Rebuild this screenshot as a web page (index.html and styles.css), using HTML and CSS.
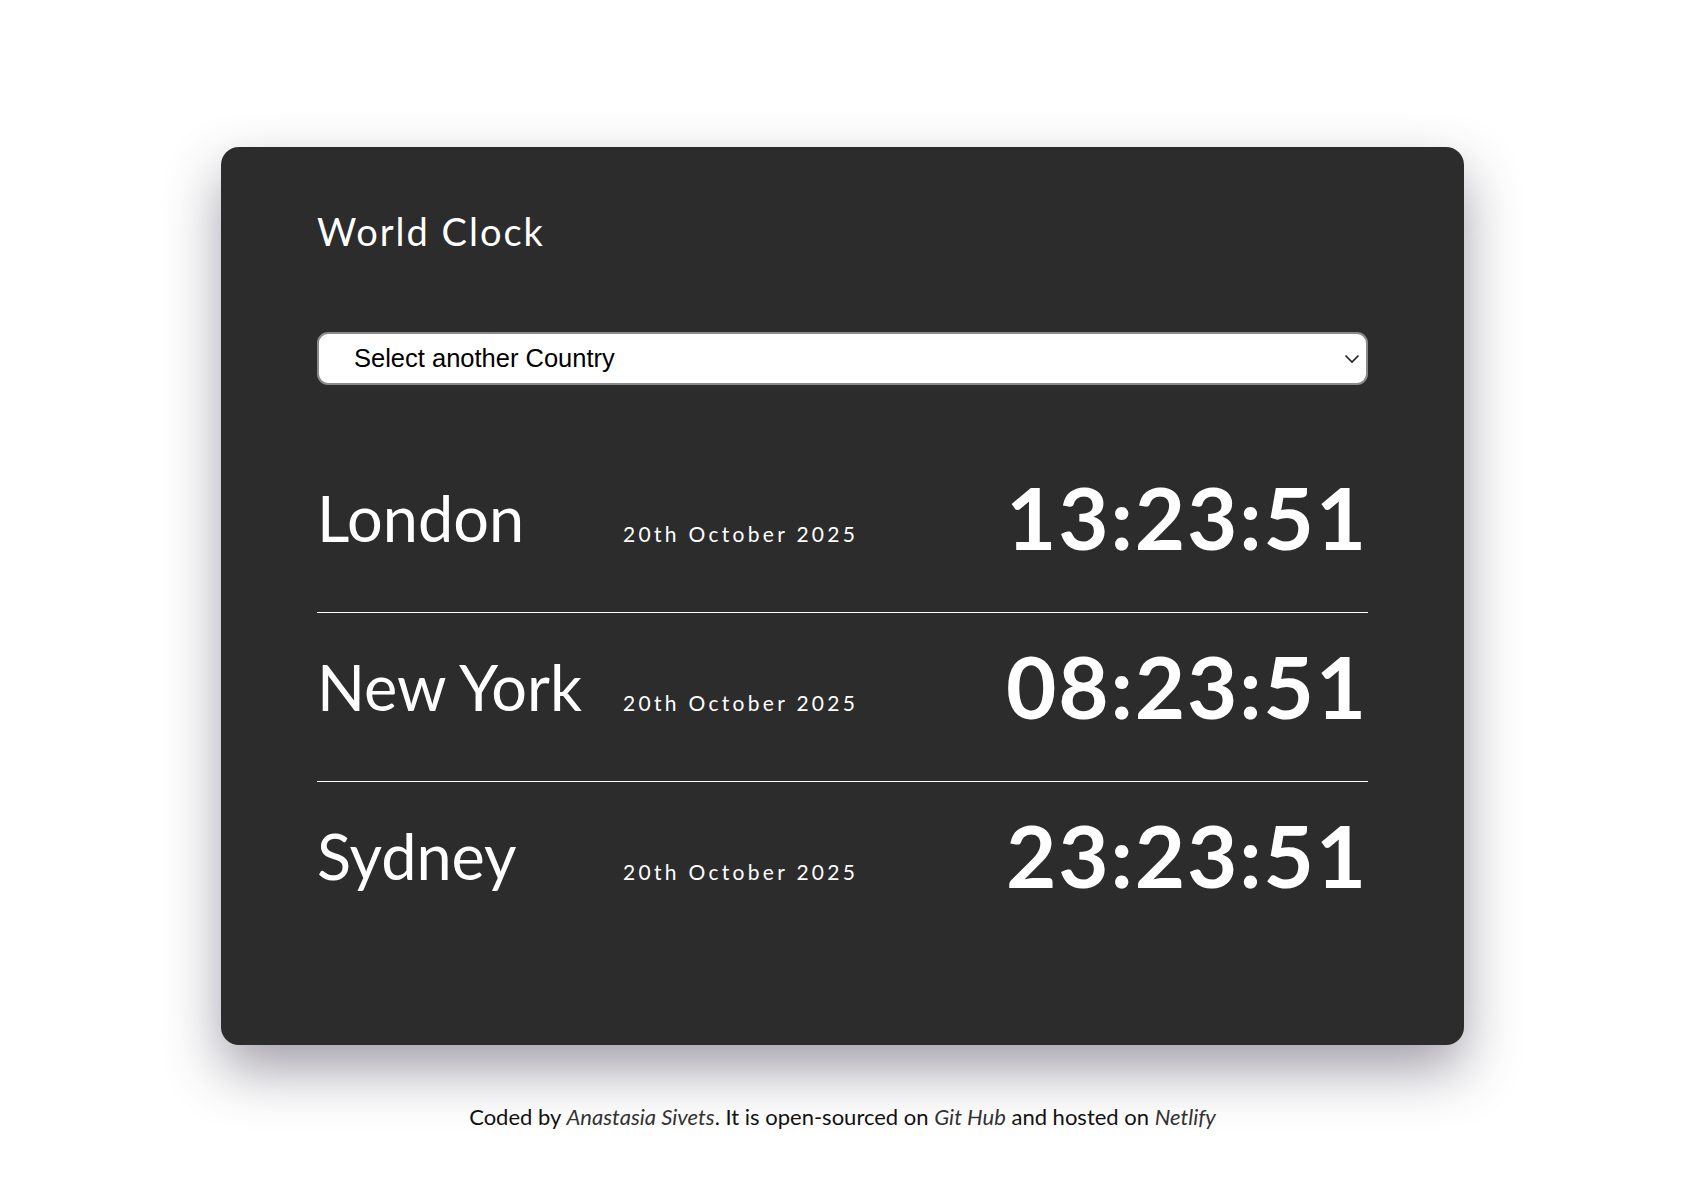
FILE: index.html
```html
<!DOCTYPE html>
<html lang="en">
<head>
    <meta charset="UTF-8">
    <meta name="viewport" content="width=device-width, initial-scale=1.0">
    <title>World Clock</title>
    <link rel="stylesheet" href="styles.css">
</head>
<body>
    <div class="container">
        <div class="clock-card">
            <h1>World Clock</h1>

            <!-- Country picker -->
            <div class="select-wrap">
                <select class="city-select" id="citySelect">
                    <option value="">Select another Country</option>
                    <option value="Europe/Paris">Paris</option>
                    <option value="Asia/Tokyo">Tokyo</option>
                </select>
                <svg class="select-arrow" width="16" height="10" viewBox="0 0 16 10">
                    <path d="M1.5 1.5 L8 8 L14.5 1.5" fill="none" stroke="#222" stroke-width="1.6"/>
                </svg>
            </div>

            <div class="cities" id="cities">
                <div class="city">
                    <div class="city-name">London</div>
                    <div class="city-date">20th October 2025</div>
                    <div class="city-time">13:23:51</div>
                </div>
                <div class="city">
                    <div class="city-name">New York</div>
                    <div class="city-date">20th October 2025</div>
                    <div class="city-time">08:23:51</div>
                </div>
                <div class="city">
                    <div class="city-name">Sydney</div>
                    <div class="city-date">20th October 2025</div>
                    <div class="city-time">23:23:51</div>
                </div>
            </div>
        </div>

        <footer>
            Coded by <a href="#">Anastasia Sivets</a>. It is open-sourced on <a href="#">Git Hub</a> and hosted on <a href="#">Netlify</a>
        </footer>
    </div>
</body>
</html>
```

FILE: styles.css
```css
body {
    font-family: Lato, "Open Sans", sans-serif;
    background-color: #fff;
    color: #111;
    margin: 0;
    padding: 0 15px 0 0;
}
.container {
    width: 1243px;
    margin: 0 auto;
    padding-top: 147px;
}
.clock-card {
    background: #2c2c2c;
    color: #fff;
    border-radius: 18px;
    padding: 62px 96px 95px;
    box-shadow: 0 25px 55px rgba(50, 45, 65, 0.45);
}
h1 {
    font-size: 38px;
    font-weight: 400;
    letter-spacing: 2px;
    margin: 0 0 77px;
    line-height: 1.2;
}
.select-wrap {
    position: relative;
    margin-bottom: 59px;
}
.city-select {
    display: block;
    width: 100%;
    height: 53px;
    font-family: "Liberation Sans", Arial, sans-serif;
    font-size: 25.5px;
    color: #000;
    background: #fff;
    border: 2px solid #8a8a8a;
    border-radius: 11px;
    padding: 0 0 0 35px;
    appearance: none;
    -webkit-appearance: none;
}
.select-arrow {
    position: absolute;
    right: 8px;
    top: 22px;
    pointer-events: none;
}
.city {
    display: grid;
    grid-template-columns: 306px auto 1fr;
    align-items: baseline;
    padding: 21px 0 57px;
    height: 90px;
    border-bottom: 1px solid #fff;
}
.city:last-child {
    border-bottom: none;
}
.city-name {
    font-size: 63px;
    line-height: 1;
}
.city-date {
    font-size: 21px;
    line-height: 1;
    letter-spacing: 3.3px;
}
.city-time {
    justify-self: end;
    font-size: 87px;
    font-weight: 700;
    letter-spacing: 1.8px;
    line-height: 1;
    position: relative;
    top: 8px;
}
footer {
    text-align: center;
    font-size: 22px;
    margin-top: 58px;
}
footer a {
    color: #333;
    font-style: italic;
    text-decoration: none;
}
```
